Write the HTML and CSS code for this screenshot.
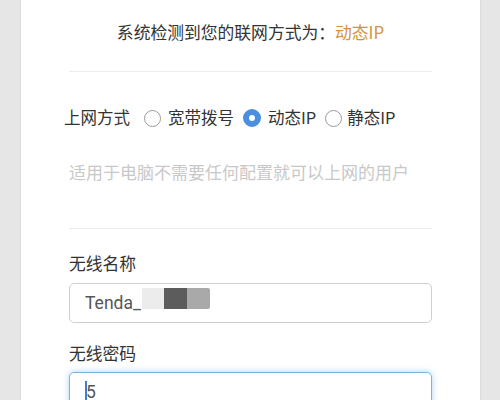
FILE: index.html
```html
<!DOCTYPE html>
<html lang="zh-CN">
<head>
<meta charset="utf-8">
<link rel="stylesheet" href="styles.css">
</head>
<body>
<div class="panel">
  <div class="title">系统检测到您的联网方式为：<span class="accent">动态IP</span></div>
  <div class="divider first"></div>
  <div class="mode-row">
    <span class="mode-label">上网方式</span>
    <span class="radio"></span><span class="opt">宽带拨号</span>
    <span class="radio checked"></span><span class="opt">动态IP</span>
    <span class="radio"></span><span class="opt last">静态IP</span>
  </div>
  <div class="desc">适用于电脑不需要任何配置就可以上网的用户</div>
  <div class="divider second"></div>
  <div class="field-label l1">无线名称</div>
  <div class="input">
    <span class="val">Tenda_</span><span class="blur b1"></span><span class="blur b2"></span><span class="blur b3"></span>
  </div>
  <div class="field-label l2">无线密码</div>
  <div class="input focused">
    <span class="caret"></span><span class="val">5</span>
  </div>
</div>
</body>
</html>
```
FILE: styles.css
```css
html, body {
  margin: 0;
  padding: 0;
}
body {
  background: #e6e6e6;
  width: 500px;
  height: 400px;
  overflow: hidden;
  font-family: "Noto Sans CJK SC", "Noto Sans", sans-serif;
  color: #333;
}
.panel {
  margin: 0 19px 0 20px;
  height: 400px;
  background: #fff;
  border-left: 1px solid #dcdcdc;
  border-right: 1px solid #dcdcdc;
  padding: 0 48px;
  box-sizing: border-box;
  overflow: hidden;
}
.title {
  padding-top: 20px;
  font-size: 16.8px;
  line-height: 24px;
  text-align: center;
  color: #333;
}
.accent {
  color: #d4923e;
}
.divider {
  height: 1px;
  background: #ececec;
}
.divider.first { margin-top: 27px; }
.divider.second { margin-top: 44px; }
.mode-row {
  margin-top: 33px;
  margin-left: -5px;
  display: flex;
  align-items: center;
  font-size: 16.5px;
  line-height: 24px;
  height: 24px;
}
.mode-label {
  margin-right: 14px;
}
.radio {
  width: 17px;
  height: 17px;
  border: 1px solid #9a9a9a;
  border-radius: 50%;
  box-sizing: border-box;
  margin-top: 2px;
  margin-right: 7px;
}
.radio.checked {
  border: 6px solid #4a8fe0;
  background: #fff;
  width: 18px;
  height: 18px;
}
.opt {
  margin-right: 9px;
}
.opt.last { margin-right: 0; margin-left: -2px; }
.desc {
  margin-top: 31px;
  font-size: 17px;
  line-height: 24px;
  color: #c8c8c8;
}
.field-label {
  font-size: 16.8px;
  line-height: 24px;
  color: #333;
}
.l1 { margin-top: 22px; }
.l2 { margin-top: 18px; }
.input {
  margin-top: 8px;
  height: 40px;
  border: 1px solid #cfcfcf;
  border-radius: 5px;
  box-sizing: border-box;
  display: flex;
  align-items: center;
  padding-left: 15px;
  font-family: Roboto, "Liberation Sans", sans-serif;
  font-size: 17.5px;
  color: #555;
}
.blur {
  display: block;
  height: 21px;
  align-self: flex-start;
  margin-top: 4px;
}
.b1 { background: #ececec; width: 22px; margin-left: 1px; }
.b2 { background: #5c5c5c; width: 23px; }
.b3 { background: #a9a9a9; width: 23px; border-radius: 0 2px 2px 0; }
.input.focused {
  margin-top: 7px;
  border-color: #7fb3d8;
  box-shadow: 0 0 6px rgba(102, 175, 233, 0.55);
  align-items: flex-start;
  padding-top: 8px;
}
.caret {
  width: 2px;
  height: 22px;
  background: #3b7fd0;
  margin-right: -1px;
}
.input.focused .val {
  line-height: 22px;
}
```
